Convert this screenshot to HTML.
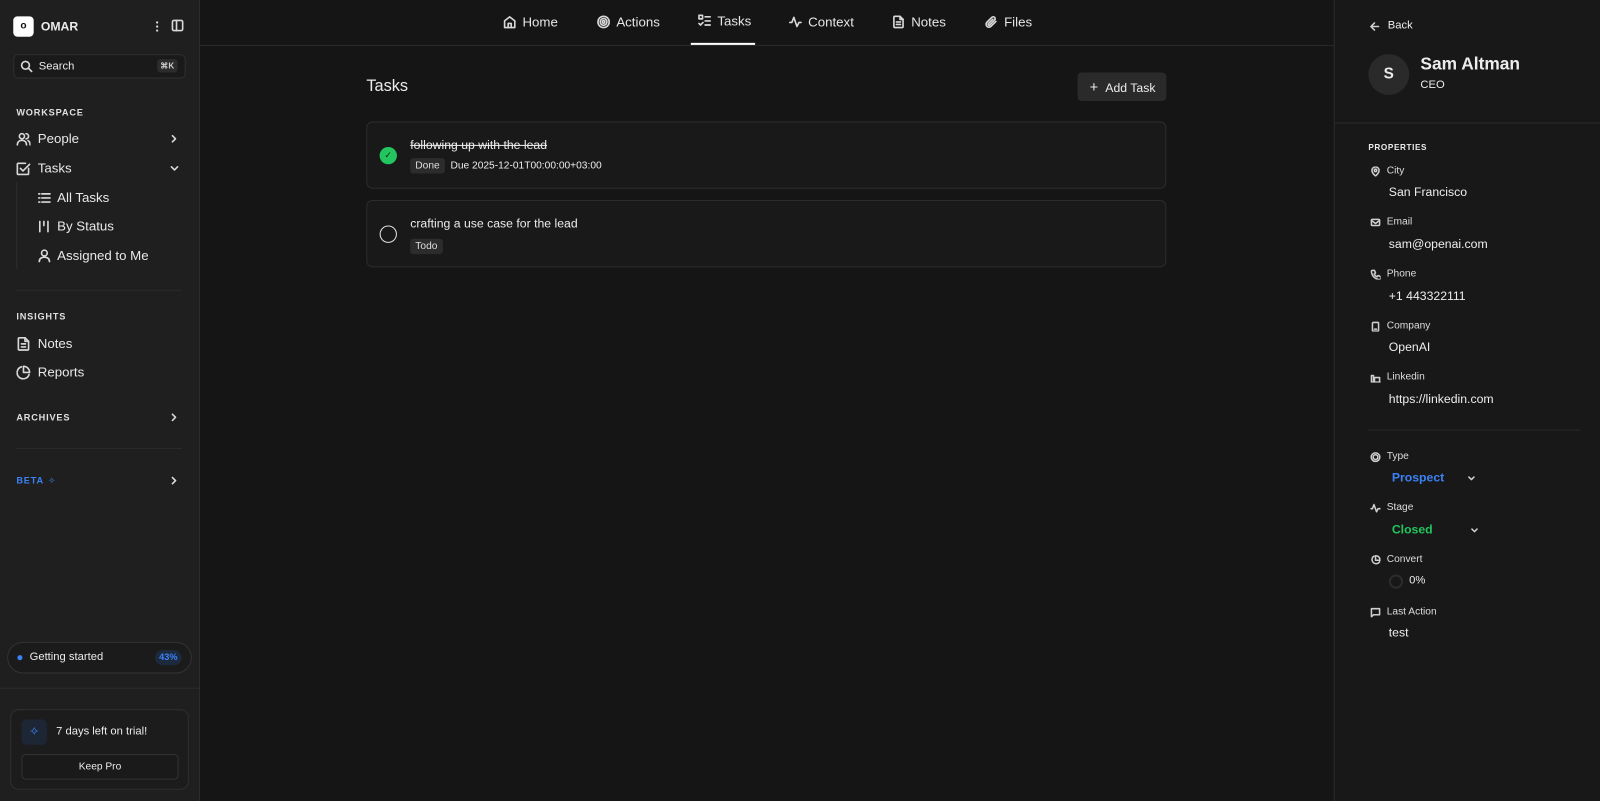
<!DOCTYPE html>
<html><head><meta charset="utf-8"><style>
*{box-sizing:border-box;margin:0;padding:0}
html,body{width:1600px;height:801px;overflow:hidden;background:#151515}
#w{position:absolute;left:0;top:0;width:1568px;height:785px;transform:scale(1.020408);transform-origin:0 0;font-family:"Liberation Sans",sans-serif;color:#ececec;font-size:13px}
svg{display:block}
.sb{position:absolute;left:0;top:0;width:196px;height:785px;background:#1f1f1f;border-right:1px solid #2c2c2c}
.ab{position:absolute}
.ic{stroke:#d8d8d8;fill:none;stroke-width:1.6;stroke-linecap:round;stroke-linejoin:round}
.sec{position:absolute;left:16px;font-size:9px;font-weight:bold;letter-spacing:.8px;color:#e0e0e0}
.item{position:absolute;left:16px;display:flex;align-items:center;gap:7px;font-size:13px;color:#e8e8e8}
.chev{position:absolute;right:20px}
.hr{position:absolute;left:16px;width:162px;height:1px;background:#2b2b2b}
.main{position:absolute;left:196px;top:0;width:1111px;height:785px}
.nav{position:absolute;left:0;top:0;width:1111px;height:45px;border-bottom:1px solid #2a2a2a}
.tab{position:absolute;top:14px;display:flex;align-items:center;gap:6px;font-size:13px;color:#e6e6e6}
.card{position:absolute;left:163px;width:784px;background:#191919;border:1px solid #2c2c2c;border-radius:6px}
.badge{display:inline-block;background:#2c2c2c;border-radius:3px;padding:2px 5px;font-size:10px;color:#ddd}
.rp{position:absolute;left:1307px;top:0;width:261px;height:785px;background:#181818;border-left:1px solid #2c2c2c}
.pl{position:absolute;left:35px;display:flex;align-items:center;gap:6px;font-size:10px;color:#ddd}
.pv{position:absolute;left:53px;font-size:12px;color:#eee}
.pic{stroke:#cfcfcf;fill:none;stroke-width:1.5;stroke-linecap:round;stroke-linejoin:round}
</style></head><body><div id="w">

<div class="sb">
  <div class="ab" style="left:13px;top:16px;width:20px;height:20px;background:#fff;border-radius:4px;color:#111;font-size:10px;font-weight:bold;text-align:center;line-height:20px">o</div>
  <div class="ab" style="left:40px;top:19px;font-size:12px;font-weight:bold">OMAR</div>
  <div class="ab" style="left:153px;top:20px;width:2px;height:11px;background:radial-gradient(circle,#ddd 1px,transparent 1.2px) 0 0/2px 4px"></div>
  <svg class="ab" style="left:168px;top:19px" width="12" height="12"><rect x="1" y="1" width="10" height="10" rx="1.5" class="ic" stroke-width="1.3"/><line x1="5" y1="1" x2="5" y2="11" class="ic" stroke-width="1.3"/></svg>
  <div class="ab" style="left:13px;top:53px;width:169px;height:24px;background:#1a1a1a;border:1px solid #2f2f2f;border-radius:5px"></div>
  <svg class="ab" style="left:20px;top:59px" width="12" height="12"><circle cx="5" cy="5" r="3.8" class="ic" stroke-width="1.3"/><line x1="8" y1="8" x2="11" y2="11" class="ic" stroke-width="1.3"/></svg>
  <div class="ab" style="left:38px;top:59px;font-size:11px">Search</div>
  <div class="ab" style="left:154px;top:58px;background:#2c2c2c;border-radius:3px;font-size:8px;padding:2px 3px;color:#ccc;font-weight:bold">⌘K</div>

  <div class="sec" style="top:105px">WORKSPACE</div>
  <div class="item" style="top:128px"><svg width="14" height="14"><circle cx="5.5" cy="4.5" r="2.5" class="ic" stroke-width="1.3"/><path d="M1 13c0-3 2-4.5 4.5-4.5S10 10 10 13M9.5 2a2.5 2.5 0 0 1 0 5M11.5 8.8c1.3.6 2 2 2 4.2" class="ic" stroke-width="1.3"/></svg>People</div>
  <svg class="chev" style="top:132px" width="8" height="8"><path d="M2 1l3 3-3 3" class="ic" stroke-width="1.3"/></svg>
  <div class="item" style="top:157px"><svg width="14" height="14"><path d="M12 7v5a1 1 0 0 1-1 1H2a1 1 0 0 1-1-1V3a1 1 0 0 1 1-1h7" class="ic" stroke-width="1.3"/><path d="M4 7l2.5 2.5L13 3" class="ic" stroke-width="1.3"/></svg>Tasks</div>
  <svg class="chev" style="top:161px" width="8" height="8"><path d="M1 2.5l3 3 3-3" class="ic" stroke-width="1.3"/></svg>
  <div class="ab" style="left:16px;top:178px;width:1px;height:86px;background:#2e2e2e"></div>
  <div class="item" style="top:186px;left:37px;gap:6px"><svg width="13" height="12"><path d="M1 2h1M1 6h1M1 10h1M4 2h8M4 6h8M4 10h8" class="ic" stroke-width="1.3"/></svg>All Tasks</div>
  <div class="item" style="top:214px;left:37px;gap:6px"><svg width="13" height="12"><path d="M2 1v10M6 1v4M10 1v10" class="ic" stroke-width="1.3"/></svg>By Status</div>
  <div class="item" style="top:243px;left:37px;gap:6px"><svg width="13" height="13"><circle cx="6.5" cy="4" r="2.8" class="ic" stroke-width="1.3"/><path d="M1.5 12.5c0-3 2-4.5 5-4.5s5 1.5 5 4.5" class="ic" stroke-width="1.3"/></svg>Assigned to Me</div>
  <div class="hr" style="top:284px"></div>
  <div class="sec" style="top:305px">INSIGHTS</div>
  <div class="item" style="top:329px"><svg width="14" height="14"><path d="M8.5 1H3a1 1 0 0 0-1 1v10a1 1 0 0 0 1 1h8a1 1 0 0 0 1-1V4.5z" class="ic" stroke-width="1.3"/><path d="M8.5 1v3.5H12M5 7h4M5 10h4" class="ic" stroke-width="1.3"/></svg>Notes</div>
  <div class="item" style="top:357px"><svg width="14" height="14"><path d="M12.5 9A6 6 0 1 1 5 1.5" class="ic" stroke-width="1.4"/><path d="M13 7A6 6 0 0 0 7 1v6z" class="ic" stroke-width="1.4"/></svg>Reports</div>
  <div class="sec" style="top:404px">ARCHIVES</div>
  <svg class="chev" style="top:405px" width="8" height="8"><path d="M2 1l3 3-3 3" class="ic" stroke-width="1.3"/></svg>
  <div class="hr" style="top:439px"></div>
  <div class="sec" style="top:466px;color:#3b82f6">BETA</div>
  <div class="ab" style="left:47px;top:466px;font-size:9px;color:#3b82f6">✧</div>
  <svg class="chev" style="top:467px" width="8" height="8"><path d="M2 1l3 3-3 3" class="ic" stroke-width="1.3"/></svg>

  <div class="ab" style="left:7px;top:629px;width:181px;height:31px;border:1px solid #333;border-radius:16px;background:#1b1b1b"></div>
  <div class="ab" style="left:17px;top:642px;width:5px;height:5px;border-radius:50%;background:#3b82f6"></div>
  <div class="ab" style="left:29px;top:638px;font-size:11px">Getting started</div>
  <div class="ab" style="left:152px;top:637px;width:26px;height:15px;border-radius:8px;background:#1d2a3e;color:#3b82f6;font-size:9px;font-weight:bold;text-align:center;line-height:15px">43%</div>
  <div class="ab" style="left:0;top:674px;width:195px;height:1px;background:#2b2b2b"></div>
  <div class="ab" style="left:10px;top:695px;width:175px;height:79px;border:1px solid #2f2f2f;border-radius:8px;background:#1c1c1c"></div>
  <div class="ab" style="left:21px;top:705px;width:25px;height:25px;border-radius:5px;background:#1d2634;color:#3b82f6;text-align:center;line-height:25px;font-size:12px">✧</div>
  <div class="ab" style="left:55px;top:711px;font-size:11px">7 days left on trial!</div>
  <div class="ab" style="left:21px;top:739px;width:154px;height:25px;border:1px solid #333;border-radius:4px;background:#1a1a1a;font-size:10px;text-align:center;line-height:23px">Keep Pro</div>
</div>

<div class="main">
  <div class="nav">
    <div class="tab" style="left:297px"><svg width="13" height="13"><path d="M1.5 5.5L6.5 1.5l5 4V12h-10z" class="ic" stroke-width="1.3"/><path d="M5 12V8h3v4" class="ic" stroke-width="1.3"/></svg>Home</div>
    <div class="tab" style="left:389px"><svg width="13" height="13"><circle cx="6.5" cy="6.5" r="5.5" class="ic" stroke-width="1.2"/><circle cx="6.5" cy="6.5" r="3.3" class="ic" stroke-width="1.2"/><circle cx="6.5" cy="6.5" r="1.2" class="ic" stroke-width="1.2"/></svg>Actions</div>
    <div class="tab" style="left:488px;top:13px"><svg width="13" height="13"><rect x="1" y="1" width="3.5" height="3.5" class="ic" stroke-width="1.2"/><path d="M1 9l1.5 1.5L5 8M7 2.5h5M7 6.5h5M7 10.5h5" class="ic" stroke-width="1.2"/></svg>Tasks</div>
    <div class="ab" style="left:481px;top:42px;width:63px;height:2px;background:#fff"></div>
    <div class="tab" style="left:577px"><svg width="13" height="13"><path d="M1 7h2l2-5 3 9 2-4h2" class="ic" stroke-width="1.3"/></svg>Context</div>
    <div class="tab" style="left:678px"><svg width="13" height="13"><path d="M8 1H3a1 1 0 0 0-1 1v9a1 1 0 0 0 1 1h7a1 1 0 0 0 1-1V4z" class="ic" stroke-width="1.3"/><path d="M8 1v3h3M4.5 6.5h4M4.5 9h4" class="ic" stroke-width="1.3"/></svg>Notes</div>
    <div class="tab" style="left:769px"><svg width="13" height="13"><path d="M11 6l-4.8 4.8a2.8 2.8 0 0 1-4-4L7 2a1.9 1.9 0 0 1 2.7 2.7L5 9.4a.9.9 0 0 1-1.3-1.3L8 3.8" class="ic" stroke-width="1.3"/></svg>Files</div>
  </div>
  <div class="ab" style="left:163px;top:76px;font-size:16px">Tasks</div>
  <div class="ab" style="left:860px;top:71px;width:87px;height:28px;background:#2a2a2a;border-radius:4px;font-size:12px;line-height:28px;padding-left:12px"><span style="font-size:14px;margin-right:7px">+</span>Add Task</div>
  <div class="card" style="top:119px;height:66px">
    <div class="ab" style="left:12px;top:24px;width:17px;height:17px;border-radius:50%;background:#22c55e;color:#0a2a12;font-size:9px;text-align:center;line-height:17px">✓</div>
    <div class="ab" style="left:42px;top:15px;font-size:12px;text-decoration:line-through">following up with the lead</div>
    <div class="ab" style="left:42px;top:35px;font-size:10px"><span class="badge">Done</span>&nbsp;&nbsp;Due 2025-12-01T00:00:00+03:00</div>
  </div>
  <div class="card" style="top:196px;height:66px">
    <div class="ab" style="left:12px;top:24px;width:17px;height:17px;border-radius:50%;border:1.4px solid #e0e0e0"></div>
    <div class="ab" style="left:42px;top:15px;font-size:12px">crafting a use case for the lead</div>
    <div class="ab" style="left:42px;top:35px"><span class="badge">Todo</span></div>
  </div>
</div>

<div class="rp">
  <svg class="ab" style="left:34px;top:21px" width="10" height="10"><path d="M9 5H1.5M5 1.5L1.5 5 5 8.5" class="pic" stroke-width="1.3"/></svg>
  <div class="ab" style="left:52px;top:19px;font-size:11px">Back</div>
  <div class="ab" style="left:33px;top:53px;width:40px;height:40px;border-radius:50%;background:#2a2a2a;font-size:15px;font-weight:bold;text-align:center;line-height:40px">S</div>
  <div class="ab" style="left:84px;top:53px;font-size:17px;font-weight:bold">Sam Altman</div>
  <div class="ab" style="left:84px;top:77px;font-size:11px">CEO</div>
  <div class="ab" style="left:0;top:120px;width:261px;height:1px;background:#2c2c2c"></div>
  <div class="ab" style="left:33px;top:140px;font-size:8px;font-weight:bold;letter-spacing:.6px">PROPERTIES</div>

  <div class="pl" style="top:162px"><svg width="10" height="10"><path d="M5 9.5S1.5 6.5 1.5 4a3.5 3.5 0 0 1 7 0c0 2.5-3.5 5.5-3.5 5.5z" class="pic" stroke-width="1.2"/><circle cx="5" cy="4" r="1.2" class="pic" stroke-width="1.2"/></svg>City</div>
  <div class="pv" style="top:181px">San Francisco</div>
  <div class="pl" style="top:212px"><svg width="10" height="10"><rect x="1" y="2" width="8" height="6" rx="1" class="pic" stroke-width="1.2"/><path d="M1 3l4 3 4-3" class="pic" stroke-width="1.2"/></svg>Email</div>
  <div class="pv" style="top:232px">sam@openai.com</div>
  <div class="pl" style="top:263px"><svg width="10" height="10"><path d="M2 1h2l1 2.5-1.3 1a5 5 0 0 0 2.8 2.8l1-1.3L10 7v2a1 1 0 0 1-1 1A8.5 8.5 0 0 1 1 2a1 1 0 0 1 1-1z" class="pic" stroke-width="1.1"/></svg>Phone</div>
  <div class="pv" style="top:283px">+1 443322111</div>
  <div class="pl" style="top:314px"><svg width="10" height="10"><rect x="2" y="1" width="6" height="8.5" rx=".8" class="pic" stroke-width="1.2"/><path d="M4 7.5h2" class="pic" stroke-width="1.1"/></svg>Company</div>
  <div class="pv" style="top:333px">OpenAI</div>
  <div class="pl" style="top:364px"><svg width="10" height="10"><path d="M1 9.5V3h2v6.5M4 9.5V5h5v4.5M1 9.5h9" class="pic" stroke-width="1.2"/></svg>Linkedin</div>
  <div class="pv" style="top:384px">https://linkedin.com</div>
  <div class="ab" style="left:33px;top:421px;width:208px;height:1px;background:#2a2a2a"></div>

  <div class="pl" style="top:442px"><svg width="10" height="10"><circle cx="5" cy="5" r="4.2" class="pic" stroke-width="1.1"/><circle cx="5" cy="5" r="2.3" class="pic" stroke-width="1.1"/></svg>Type</div>
  <div class="pv" style="top:461px;left:56px;color:#3b82f6;font-weight:bold">Prospect</div>
  <svg class="ab" style="left:130px;top:465px" width="8" height="8"><path d="M1.5 2.5l2.5 2.5 2.5-2.5" class="pic" stroke-width="1"/></svg>
  <div class="pl" style="top:492px"><svg width="10" height="10"><path d="M.5 5.5h1.5l1.5-4 2.5 7 1.5-3h2" class="pic" stroke-width="1.1"/></svg>Stage</div>
  <div class="pv" style="top:512px;left:56px;color:#22c55e;font-weight:bold">Closed</div>
  <svg class="ab" style="left:133px;top:516px" width="8" height="8"><path d="M1.5 2.5l2.5 2.5 2.5-2.5" class="pic" stroke-width="1"/></svg>
  <div class="pl" style="top:543px"><svg width="10" height="10"><path d="M9 6.5A4 4 0 1 1 3.5 1M9.5 5A4.5 4.5 0 0 0 5 .5V5z" class="pic" stroke-width="1.2"/></svg>Convert</div>
  <div class="ab" style="left:53px;top:563px;width:14px;height:14px;border-radius:50%;border:2px solid #2c2c2c"></div>
  <div class="pv" style="top:563px;left:73px;font-size:11px">0%</div>
  <div class="pl" style="top:594px"><svg width="10" height="10"><path d="M1 1.5h8v6H3L1 9.5z" class="pic" stroke-width="1.2"/></svg>Last Action</div>
  <div class="pv" style="top:613px">test</div>
</div>
</div></body></html>
